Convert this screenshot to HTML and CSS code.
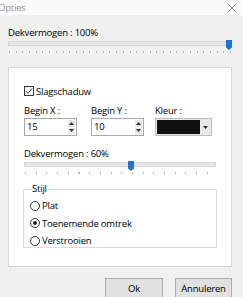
FILE: index.html
```html
<!DOCTYPE html>
<html>
<head>
<meta charset="utf-8">
<link rel="stylesheet" href="styles.css">
</head>
<body>
<div class="titlebar">
  <span class="title">Opties</span>
  <svg class="close" width="8" height="8" viewBox="0 0 8 8"><path d="M0.5 0.5 L7.5 7.5 M7.5 0.5 L0.5 7.5" stroke="#8c8c8c" stroke-width="0.9" fill="none"/></svg>
</div>
<div class="content">
  <div class="label">Dekvermogen : 100%</div>
  <div class="slider s1">
    <div class="track"></div>
    <svg class="thumb" style="left:218px" width="6" height="10" viewBox="0 0 6 10"><path d="M0 0 H6 V7.5 L3 10 L0 7.5 Z" fill="#1d74d2"/></svg>
    <div class="ticks"></div>
  </div>

  <div class="panel">
    <div class="check">
      <span class="box"><svg width="8" height="8" viewBox="0 0 8 8"><path d="M1 4.2 L3 6.3 L7 1.5" stroke="#222" stroke-width="0.9" fill="none"/></svg></span>
      <span>Slagschaduw</span>
    </div>

    <div class="fields">
      <div class="field fx">
        <div class="flabel">Begin X :</div>
        <div class="spin">
          <span class="val">15</span>
          <span class="btns">
            <span class="sb"><svg width="5" height="3" viewBox="0 0 5 3"><path d="M0 3 L2.5 0 L5 3 Z" fill="#333"/></svg></span>
            <span class="sb"><svg width="5" height="3" viewBox="0 0 5 3"><path d="M0 0 L2.5 3 L5 0 Z" fill="#333"/></svg></span>
          </span>
        </div>
      </div>
      <div class="field fy">
        <div class="flabel">Begin Y :</div>
        <div class="spin">
          <span class="val">10</span>
          <span class="btns">
            <span class="sb"><svg width="5" height="3" viewBox="0 0 5 3"><path d="M0 3 L2.5 0 L5 3 Z" fill="#333"/></svg></span>
            <span class="sb"><svg width="5" height="3" viewBox="0 0 5 3"><path d="M0 0 L2.5 3 L5 0 Z" fill="#333"/></svg></span>
          </span>
        </div>
      </div>
      <div class="field fc">
        <div class="flabel">Kleur :</div>
        <div class="combo">
          <span class="swatch"></span>
          <span class="drop"><svg width="5" height="3" viewBox="0 0 5 3"><path d="M0 0 L2.5 3 L5 0 Z" fill="#333"/></svg></span>
        </div>
      </div>
    </div>

    <div class="label l2">Dekvermogen : 60%</div>
    <div class="slider s2">
      <div class="track"></div>
      <svg class="thumb" style="left:104px" width="6" height="10" viewBox="0 0 6 10"><path d="M0 0 H6 V7.5 L3 10 L0 7.5 Z" fill="#1d74d2"/></svg>
      <div class="ticks"></div>
    </div>

    <fieldset class="group">
      <legend>Stijl</legend>
      <div class="radio"><span class="circle"></span><span>Plat</span></div>
      <div class="radio"><span class="circle on"></span><span>Toenemende omtrek</span></div>
      <div class="radio"><span class="circle"></span><span>Verstrooien</span></div>
    </fieldset>
  </div>

  <div class="buttons">
    <button class="btn ok">Ok</button>
    <button class="btn cancel">Annuleren</button>
  </div>
</div>
</body>
</html>
```
FILE: styles.css
```css
html, body {
  margin: 0;
  padding: 0;
}
body {
  width: 243px;
  height: 297px;
  overflow: hidden;
  background: #f0f0f0;
  font-family: "Open Sans", "Noto Sans", sans-serif;
  font-size: 9.5px;
  letter-spacing: -0.2px;
  color: #000;
}
.titlebar {
  height: 15px;
  background: #fbfbfb;
  display: flex;
  align-items: center;
  justify-content: space-between;
  padding-right: 7px;
}
.title {
  margin-left: -2px;
  color: #9a9a9a;
  line-height: 14px;
}
.close {
  display: block;
}
.content {
  padding: 11px 11px 0 8px;
}
.label {
  line-height: 14px;
  height: 14px;
}
.slider {
  position: relative;
}
.s1 {
  width: 224px;
}
.track {
  margin-top: 1px;
  height: 5px;
  box-sizing: border-box;
  background: #e7e7e7;
  border: 1px solid #d6d6d6;
}
.thumb {
  position: absolute;
  top: -1px;
  display: block;
}
.ticks {
  height: 2px;
  margin-top: 5px;
}
.s1 .ticks {
  margin-left: 1px;
  margin-right: 1px;
  background: repeating-linear-gradient(to right, #b4b4b4 0 1px, transparent 1px 6.7px);
}
.panel {
  margin-top: 14px;
  height: 200px;
  box-sizing: border-box;
  background: #fff;
  border: 1px solid #dadada;
  padding: 16px 0 0 15px;
}
.check {
  display: flex;
  align-items: center;
  height: 14px;
}
.box {
  width: 10px;
  height: 10px;
  box-sizing: border-box;
  border: 1px solid #333;
  margin-right: 2px;
  display: flex;
  align-items: center;
  justify-content: center;
}
.box svg {
  display: block;
}
.fields {
  display: flex;
  margin-top: 6px;
}
.field .flabel {
  line-height: 14px;
  height: 14px;
}
.fx { width: 53px; margin-right: 14px; }
.fy { width: 53px; margin-right: 11px; }
.fc { width: 57px; }
.spin {
  height: 18px;
  box-sizing: border-box;
  border: 1px solid #a9a9a9;
  background: #fff;
  display: flex;
  justify-content: space-between;
}
.val {
  line-height: 16px;
  padding-left: 2px;
}
.btns {
  display: flex;
  flex-direction: column;
  width: 7px;
  padding: 1px 1px 1px 0;
  gap: 1px;
}
.sb {
  flex: 1;
  background: #e6e6e6;
  display: flex;
  align-items: center;
  justify-content: center;
}
.sb svg { display: block; }
.combo {
  height: 18px;
  box-sizing: border-box;
  border: 1px solid #bcbcbc;
  background: #e8e8e8;
  display: flex;
  padding: 1px;
}
.swatch {
  width: 43px;
  background: #111;
}
.drop {
  flex: 1;
  display: flex;
  align-items: center;
  justify-content: center;
}
.drop svg { display: block; }
.l2 {
  margin-top: 11px;
}
.s2 {
  width: 192px;
}
.s2 .ticks {
  margin-left: 1px;
  margin-right: 2px;
  background: repeating-linear-gradient(to right, #b4b4b4 0 1px, transparent 1px 10.7px);
}
.group {
  margin: 8px 0 0 -1px;
  width: 194px;
  height: 66px;
  box-sizing: border-box;
  border: 1px solid #dcdcdc;
  padding: 1px 0 0 6px;
}
.group legend {
  padding: 0 1px;
  margin-left: 1px;
  line-height: 14px;
}
.radio {
  display: flex;
  align-items: center;
  height: 17.5px;
}
.circle {
  width: 10px;
  height: 10px;
  box-sizing: border-box;
  border: 1px solid #333;
  border-radius: 50%;
  margin-right: 2px;
  position: relative;
}
.circle.on::after {
  content: "";
  position: absolute;
  left: 2px;
  top: 2px;
  width: 4px;
  height: 4px;
  border-radius: 50%;
  background: #222;
}
.buttons {
  display: flex;
  justify-content: flex-end;
  gap: 12px;
  margin-top: 11px;
}
.btn {
  height: 21px;
  box-sizing: border-box;
  background: #e1e1e1;
  border: 1px solid #adadad;
  font-family: inherit;
  font-size: 9.5px;
  letter-spacing: -0.2px;
  color: #000;
  padding: 0;
}
.ok { width: 58px; }
.cancel { width: 57px; }
```
